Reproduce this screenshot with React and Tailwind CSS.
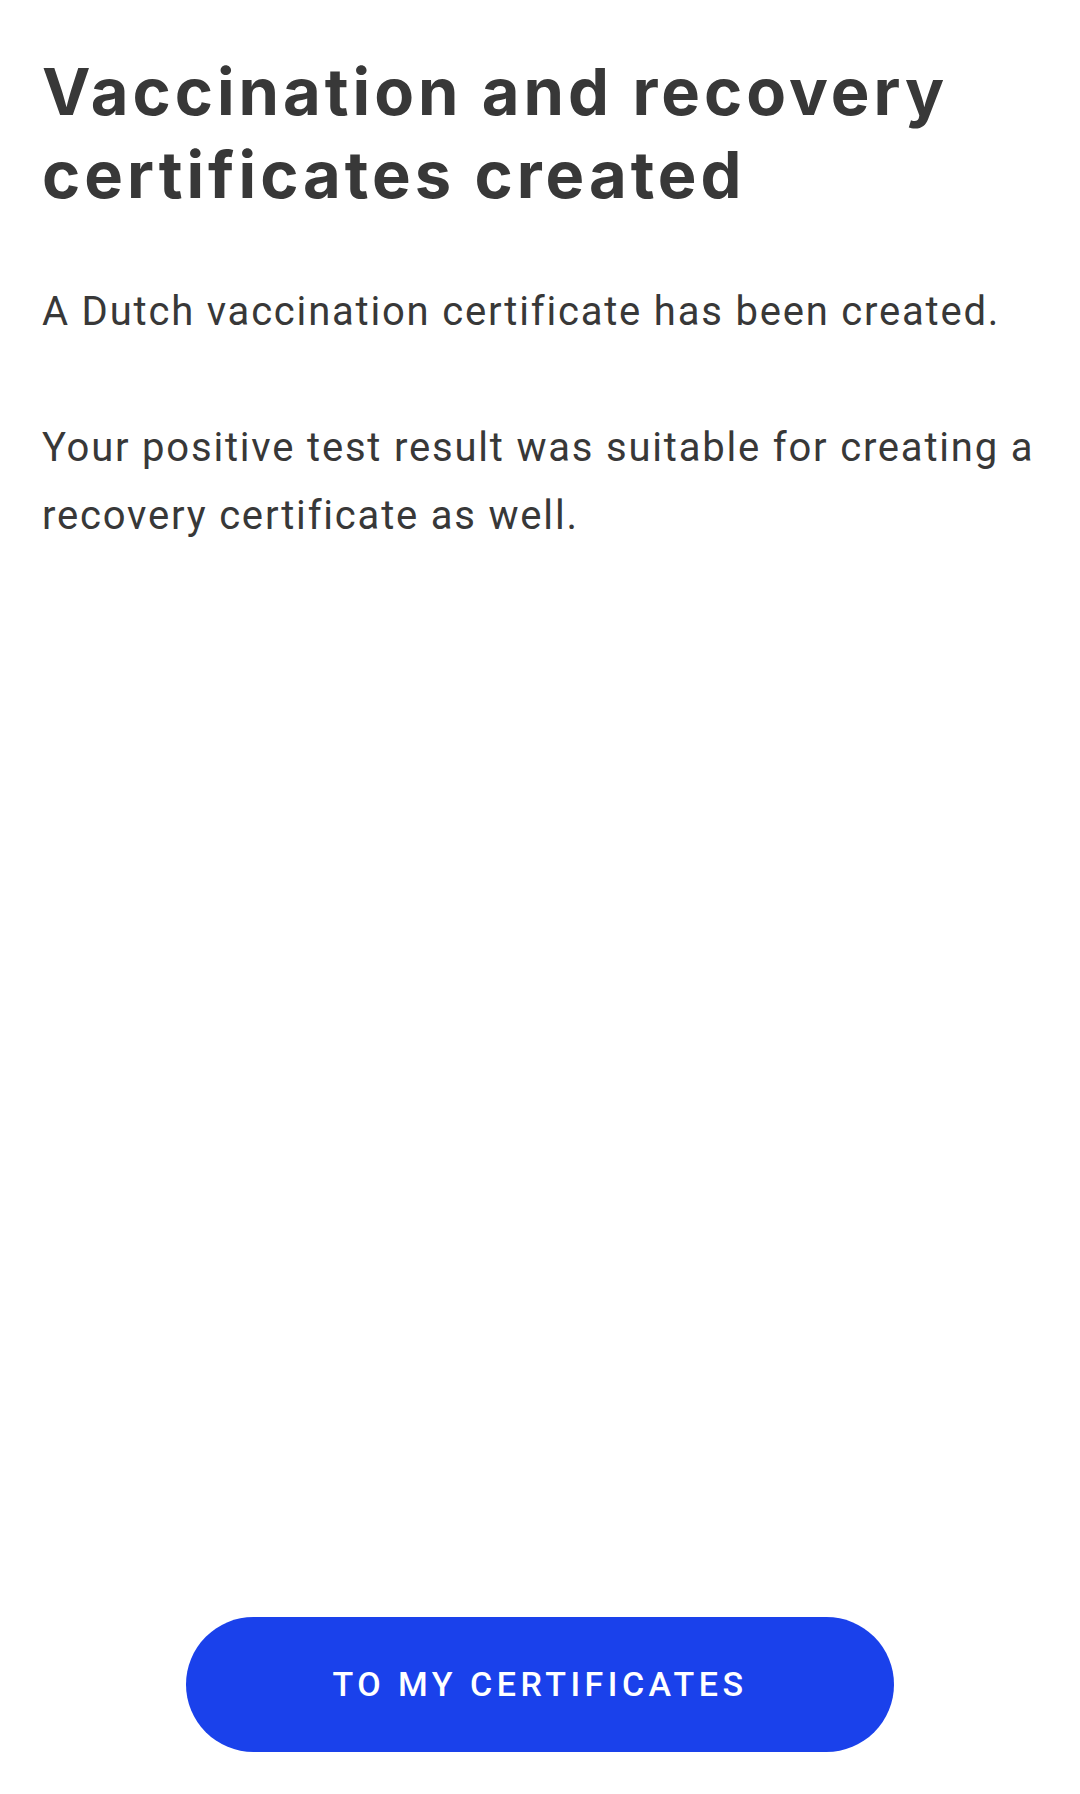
import React from "react";

const App = () => {
  return (
    <div className="min-h-screen w-full bg-white flex flex-col px-[42px]">
      <h1 className="mt-[50px] font-['Inter',sans-serif] font-bold text-[65px] leading-[83px] text-[#383838] tracking-[4px] whitespace-nowrap">
        Vaccination and recovery
        <br />
        certificates created
      </h1>

      <div className="mt-[62px] font-['Roboto',sans-serif] text-[40px] leading-[68px] text-[#383838] tracking-[1.8px]">
        <p className="whitespace-nowrap">
          A Dutch vaccination certificate has been created.
        </p>
        <div className="h-[68px]" />
        <p className="whitespace-nowrap">
          Your positive test result was suitable for creating a
        </p>
        <p className="whitespace-nowrap">recovery certificate as well.</p>
      </div>

      <div className="flex-1" />

      <div className="flex justify-center mb-[42px]">
        <button className="w-[708px] h-[135px] rounded-full bg-[#1a41eb] text-white font-['Roboto',sans-serif] font-medium text-[34px] tracking-[4.5px] uppercase">
          To my certificates
        </button>
      </div>
    </div>
  );
};

export default App;
